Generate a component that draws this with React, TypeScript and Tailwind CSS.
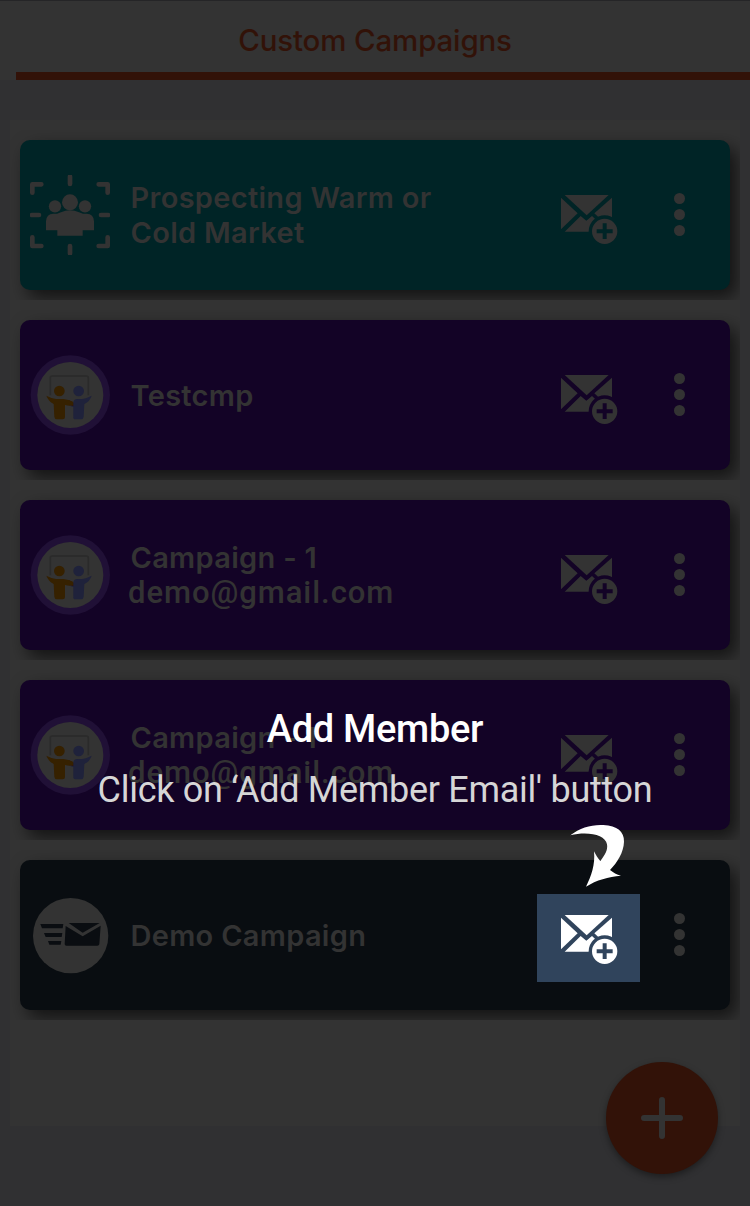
import type { ReactNode } from "react";

function MailPlus({ id }: { id: string }) {
  return (
    <svg width="59" height="52" viewBox="90 297 177 156" fill="currentColor">
      <mask id={id}>
        <rect x="90" y="296" width="177" height="156" fill="#fff" />
        <circle cx="224" cy="409" r="48" fill="#000" />
      </mask>
      <g mask={`url(#${id})`}>
        <path d="M104 300H236L170 361Z" />
        <path d="M93 308L143 355L93 403Z" />
        <path d="M246 308L193 355L246 405Z" />
        <path d="M104 410L152 363L169 377L186 363L236 410Z" />
      </g>
      <path
        fillRule="evenodd"
        d="M186 409a38 38 0 1 0 76 0a38 38 0 1 0 -76 0ZM218 385H230V403H248V415H230V432H218V415H200V403H218Z"
      />
    </svg>
  );
}

function ProspectIcon() {
  return (
    <svg width="80" height="80" viewBox="30 45 240 240" fill="#333333">
      <g stroke="#333333" strokeWidth="14" fill="none" strokeLinecap="round" strokeLinejoin="round">
        <path d="M37 98V73H64M236 73H263V98M37 232V258H64M236 258H263V232" />
        <path d="M150 50V72M150 258V280M36 165H57M243 165H264" />
      </g>
      <circle cx="150" cy="127" r="24" />
      <circle cx="105" cy="139" r="18.500" />
      <circle cx="195" cy="139" r="18.500" />
      <path d="M78 211V184Q79 161 100 161H111L123 157Q136 151 150 151Q164 151 177 157L189 161H200Q221 161 222 184V211H188V227H112V211Z" />
    </svg>
  );
}

function PresentersIcon() {
  return (
    <svg width="80" height="80" viewBox="30 45 240 240">
      <circle cx="151" cy="165" r="119" fill="#201036" />
      <circle cx="151" cy="165" r="99" fill="#333333" />
      <path d="M91 166V113Q91 108 96 108H199Q205 108 205 114V166" fill="none" stroke="#2a2a2a" strokeWidth="5" />
      <path d="M146 180Q156 184 162 190V199Q150 198 143 193Z" fill="#34150a" />
      <g fill="#362100">
        <circle cx="118" cy="153" r="16" />
        <path d="M79 167Q94 175 108 177H130Q146 178 160 186V196Q147 199 135 195V231Q135 238 128 238H111Q104 238 103 230L101 192Q85 183 79 167Z" />
      </g>
      <g fill="#1f223b">
        <circle cx="176" cy="153" r="16" />
        <path d="M215 167Q200 175 187 177H172Q160 178 160 188V198Q150 198 148 194Q151 199 160 201V231Q159 238 166 238H183Q190 238 191 230L193 192Q210 183 215 167Z" />
      </g>
    </svg>
  );
}

function ExpressMailIcon() {
  return (
    <svg width="80" height="80" viewBox="30 30 240 240">
      <circle cx="152" cy="152" r="113" fill="#333333" />
      <g fill="#0a0d11">
        <path d="M61 117H130L128 130H66ZM72 144H127L125 156H77ZM84 168H124L122 179H88Z" />
        <path d="M137 123L188 154L242 122L238 178Q237 182 232 182H139Q134 182 134 177Z" />
        <path d="M146 114H239L188 143Z" />
      </g>
    </svg>
  );
}

function Dots() {
  return (
    <div className="flex flex-col gap-[5px]">
      <span className="size-[11px] rounded-full bg-[#333333]" />
      <span className="size-[11px] rounded-full bg-[#333333]" />
      <span className="size-[11px] rounded-full bg-[#333333]" />
    </div>
  );
}

type Campaign = { id: string; color: string; icon: ReactNode; title: ReactNode; active?: boolean };

const demoTitle = (
  <>
    <div>Campaign - 1</div>
    <div className="-ml-[2.5px] font-['Roboto',sans-serif] text-[31px] font-medium tracking-[0.95px]">demo@gmail.com</div>
  </>
);

const campaigns: Campaign[] = [
  {
    id: "warm",
    color: "bg-[#002426]",
    icon: <ProspectIcon />,
    title: (
      <>
        Prospecting Warm or
        <br />
        Cold Market
      </>
    ),
  },
  { id: "test", color: "bg-[#130326]", icon: <PresentersIcon />, title: "Testcmp" },
  { id: "c1", color: "bg-[#130326]", icon: <PresentersIcon />, title: demoTitle },
  { id: "c2", color: "bg-[#130326]", icon: <PresentersIcon />, title: demoTitle },
  { id: "demo", color: "bg-[#090d11]", icon: <ExpressMailIcon />, title: "Demo Campaign", active: true },
];

function CampaignRow({ campaign }: { campaign: Campaign }) {
  return (
    <li className="h-[170px] overflow-hidden p-[10px]">
      <div
        className={`flex h-[150px] items-center rounded-[10px] pl-[10px] shadow-[7px_8px_18px_rgba(0,0,0,0.62)] ${campaign.color}`}
      >
        {campaign.icon}
        <div className="ml-[20.5px] w-[406.5px] pt-[0.5px] text-[29px] leading-[35px] font-semibold tracking-[0.3px] whitespace-nowrap text-[#333333]">
          {campaign.title}
        </div>
        <button
          className={`mt-[6px] flex h-[88px] w-[103px] items-start pt-[20px] pl-[23px] ${
            campaign.active ? "bg-[#30445c] text-white" : "text-[#333333]"
          }`}
          aria-label="Add Member Email"
        >
          <MailPlus id={`halo-${campaign.id}`} />
        </button>
        <div className="mb-[2px] ml-[34px]">
          <Dots />
        </div>
      </div>
    </li>
  );
}

export default function App() {
  return (
    <div className="relative h-[1206px] w-[750px] overflow-hidden bg-[#303032] font-['Inter',sans-serif]">
      <header className="flex h-[80px] flex-col border-t border-[#252527] bg-[#333333]">
        <h1 className="flex h-[71px] items-center justify-center pt-[7px] text-[29.5px] font-medium tracking-[-0.15px] text-[#321208]">
          Custom Campaigns
        </h1>
        <div className="ml-[16px] h-[8px] bg-[#321208]" />
      </header>
      <main className="mx-[10px] mt-[40px] h-[1006px] bg-[#333333] pt-[10px]">
        <ul className="flex flex-col gap-[10px]">
          {campaigns.map((c) => (
            <CampaignRow key={c.id} campaign={c} />
          ))}
        </ul>
      </main>
      <button
        className="absolute top-[1062px] left-[606px] flex size-[112px] items-center justify-center rounded-full bg-[#321208] shadow-[0_3px_7px_rgba(0,0,0,0.4)]"
        aria-label="Add campaign"
      >
        <svg width="42" height="42" viewBox="0 0 42 42" stroke="#333333" strokeWidth="6" strokeLinecap="round">
          <path d="M21 3V39M3 21H39" />
        </svg>
      </button>
      <div className="absolute inset-x-0 top-[706px] text-center font-['Roboto',sans-serif] whitespace-nowrap">
        <p className="text-[38px] leading-[46px] font-medium tracking-[-0.3px] text-white">Add Member</p>
        <p className="mt-[15px] text-[36px] leading-[46px] tracking-[-0.3px] text-[#d6d6d6]">
          Click on ‘Add Member Email' button
        </p>
      </div>
      <svg className="absolute top-[824px] left-[570px]" width="55" height="63" viewBox="120 27 165 189" fill="#fff">
        <path d="M121 61C150 38 185 28 220 30C262 32 283 50 282 80C281 112 262 142 240 165C250 173 260 179 273 182C235 185 200 195 168 215C184 183 196 150 192 109C198 120 203 130 211 138C225 120 234 105 231 88C226 60 175 48 121 61Z" />
      </svg>
    </div>
  );
}
